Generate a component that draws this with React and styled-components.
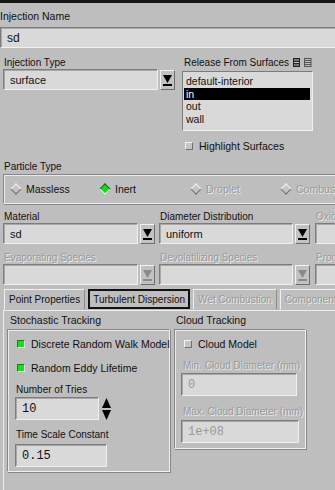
import React from "react";
import styled, { createGlobalStyle } from "styled-components";

const GlobalStyle = createGlobalStyle`
  body {
    margin: 0;
    background: #bebebe;
    font-family: "Liberation Sans", Arial, sans-serif;
    font-size: 10px;
    color: #111;
    overflow: hidden;
  }
`;

const Window = styled.div`
  width: 335px;
  height: 490px;
  overflow: hidden;
  background: #bebebe;
`;

const Canvas = styled.div`
  width: 420px;
`;

const TopStrip = styled.div`
  height: 3px;
  background: #161616;
`;

const Label = styled.div`
  height: 13px;
  line-height: 13px;
  white-space: nowrap;
  margin: ${(p) => p.m || "0"};
  color: ${(p) => (p.off ? "#9a9a9a" : "#111")};
  text-shadow: ${(p) => (p.off ? "1px 1px 0 #ececec" : "none")};
`;

const Field = styled.div`
  box-sizing: border-box;
  width: ${(p) => (p.w ? p.w + "px" : "100%")};
  height: ${(p) => p.h || 21}px;
  flex-shrink: 0;
  background: #d9d9d9;
  border: 1px solid;
  border-color: #7c7c7c #f0f0f0 #f0f0f0 #7c7c7c;
  box-shadow: inset 1px 1px 0 #a8a8a8;
  padding-left: ${(p) => p.pl || 6}px;
  display: flex;
  align-items: center;
  white-space: nowrap;
  font-size: ${(p) => (p.mono ? 12 : 11)}px;
  font-family: ${(p) => (p.mono ? '"Liberation Mono", monospace' : '"Liberation Sans", Arial, sans-serif')};
  color: ${(p) => (p.off ? "#9a9a9a" : "#111")};
`;

const NameBlock = styled.div`
  padding-top: 7px;
`;

const Row = styled.div`
  display: flex;
  align-items: flex-start;
  margin: ${(p) => p.m || "0"};
`;

const Col = styled.div`
  display: flex;
  flex-direction: column;
  width: ${(p) => p.w}px;
  flex-shrink: 0;
  margin-left: ${(p) => p.ml || 0}px;
`;

const Combo = styled.div`
  display: flex;
  align-items: flex-start;
  gap: 2px;
  margin-left: ${(p) => p.ml || 0}px;
`;

const ArrowBtn = styled.div`
  box-sizing: border-box;
  width: 15px;
  height: 20px;
  margin-top: 1px;
  flex-shrink: 0;
  border: 1px solid;
  border-color: #f2f2f2 #6e6e6e #6e6e6e #f2f2f2;
  background: #c2c2c2;
  display: flex;
  justify-content: center;
  padding-top: 4px;
`;

const Arrow = ({ off }) => (
  <ArrowBtn>
    <svg width="9" height="11" viewBox="0 0 9 11">
      <polygon points="0,0 9,0 4.5,8" fill={off ? "#8a8a8a" : "#000"} />
      <rect x="0" y="9" width="9" height="2" fill={off ? "#8a8a8a" : "#000"} />
    </svg>
  </ArrowBtn>
);

const ListHead = styled.div`
  display: flex;
  align-items: center;
  gap: 4px;
  margin-left: 2px;
  height: 13px;
  white-space: nowrap;
`;

const ListBox = styled.div`
  box-sizing: border-box;
  width: 131px;
  height: 60px;
  margin-top: 2px;
  background: #d9d9d9;
  border: 1px solid;
  border-color: #7c7c7c #f0f0f0 #f0f0f0 #7c7c7c;
  padding: 3px 2px 0 1px;
  font-size: 10.5px;
`;

const ListItem = styled.div`
  height: 12.5px;
  line-height: 12px;
  padding-left: 2px;
  background: ${(p) => (p.sel ? "#000" : "transparent")};
  color: ${(p) => (p.sel ? "#fff" : "#111")};
`;

const Check = styled.div`
  display: flex;
  align-items: center;
  gap: 6px;
  height: 13px;
  margin: ${(p) => p.m || "0"};
  white-space: nowrap;
  font-size: 10.5px;
`;

const Box = styled.div`
  box-sizing: border-box;
  width: 8px;
  height: 8px;
  flex-shrink: 0;
  border: 1px solid;
  border-color: ${(p) => (p.on ? "#555 #eee #eee #555" : "#f2f2f2 #707070 #707070 #f2f2f2")};
  background: ${(p) => (p.on ? "#00f000" : "#c4c4c4")};
`;

const Group = styled.div`
  box-sizing: border-box;
  border: 1px solid;
  border-color: #868686 #f0f0f0 #f0f0f0 #868686;
  box-shadow: inset 1px 1px 0 #eaeaea, 1px 1px 0 #868686;
  width: ${(p) => (p.w ? p.w + "px" : "auto")};
  height: ${(p) => (p.h ? p.h + "px" : "auto")};
  margin: ${(p) => p.m || "0"};
  padding: ${(p) => p.pad || "0"};
`;

const RadioRow = styled.div`
  display: flex;
  align-items: center;
  height: 100%;
`;

const Radio = styled.div`
  display: flex;
  align-items: center;
  gap: 6px;
  width: ${(p) => p.w}px;
  flex-shrink: 0;
  white-space: nowrap;
  font-size: 10.5px;
  color: ${(p) => (p.off ? "#9a9a9a" : "#111")};
  text-shadow: ${(p) => (p.off ? "1px 1px 0 #ececec" : "none")};
`;

const Diamond = styled.div`
  width: 6px;
  height: 6px;
  margin-left: 1px;
  transform: rotate(45deg);
  border: 1px solid;
  border-color: #f4f4f4 #707070 #707070 #f4f4f4;
  background: ${(p) => (p.on ? "#00e800" : "#c4c4c4")};
  ${(p) => p.on && "border-color: #4a4a4a #f4f4f4 #f4f4f4 #4a4a4a;"}
`;

const TabBar = styled.div`
  display: flex;
  align-items: flex-end;
  gap: 3px;
  margin: 3px 0 0 4px;
  height: 22px;
`;

const Tab = styled.div`
  box-sizing: border-box;
  height: ${(p) => (p.sel ? 20 : 21)}px;
  padding: 0 ${(p) => (p.sel ? 3 : 4)}px;
  margin-bottom: ${(p) => (p.sel ? 1 : 0)}px;
  display: flex;
  align-items: center;
  white-space: nowrap;
  font-size: 10px;
  border: ${(p) => (p.sel ? "2px solid #111" : "1px solid")};
  border-color: ${(p) => (p.sel ? "#111" : "#f0f0f0 #8a8a8a transparent #f0f0f0")};
  color: ${(p) => (p.off ? "#9a9a9a" : "#111")};
  text-shadow: ${(p) => (p.off ? "1px 1px 0 #ececec" : "none")};
`;

const Panel = styled.div`
  margin-left: 3px;
  border-top: 1px solid #ececec;
  border-left: 1px solid #ececec;
  height: 200px;
  padding: 3px 0 0 3px;
  display: flex;
  gap: 4px;
`;

const Spinner = styled.div`
  display: flex;
  flex-direction: column;
  justify-content: center;
  margin-left: 3px;
  height: 23px;
`;

const ListIcons = () => (
  <svg width="19" height="9" viewBox="0 0 19 9">
    <rect x="0" y="0" width="7" height="9" fill="#222" />
    <line x1="1" y1="2" x2="6" y2="2" stroke="#ccc" />
    <line x1="1" y1="4.5" x2="6" y2="4.5" stroke="#ccc" />
    <line x1="1" y1="7" x2="6" y2="7" stroke="#ccc" />
    <rect x="11.5" y="0.5" width="6.5" height="8" fill="none" stroke="#555" />
    <line x1="12" y1="2.5" x2="18" y2="2.5" stroke="#555" />
    <line x1="12" y1="4.5" x2="18" y2="4.5" stroke="#555" />
    <line x1="12" y1="6.5" x2="18" y2="6.5" stroke="#555" />
  </svg>
);

const SpinArrows = () => (
  <svg width="9" height="22" viewBox="0 0 9 22">
    <polygon points="4.5,0 9,10 0,10" fill="#000" />
    <polygon points="0,12 9,12 4.5,22" fill="#000" />
  </svg>
);

export default function App() {
  return (
    <Window>
      <GlobalStyle />
      <Canvas>
        <TopStrip />
        <NameBlock>
          <Label style={{ fontSize: 10.5 }}>Injection Name</Label>
          <Field h={21} style={{ marginTop: 4, fontSize: 12 }}>sd</Field>
        </NameBlock>

        <Row m="8px 0 0 0">
          <Col w={177}>
            <Label m="0 0 0 4px">Injection Type</Label>
            <Combo ml={3}>
              <Field w={155}>surface</Field>
              <Arrow />
            </Combo>
          </Col>
          <Col w={200} ml={5}>
            <ListHead>
              Release From Surfaces
              <ListIcons />
            </ListHead>
            <ListBox>
              <ListItem>default-interior</ListItem>
              <ListItem sel>in</ListItem>
              <ListItem>out</ListItem>
              <ListItem>wall</ListItem>
            </ListBox>
            <Check m="8px 0 0 3px">
              <Box />
              Highlight Surfaces
            </Check>
          </Col>
        </Row>

        <Label m="8px 0 0 4px">Particle Type</Label>
        <Group h={30} m="1px 0 0 3px" pad="0 0 0 7px">
          <RadioRow>
            <Radio w={89}><Diamond />Massless</Radio>
            <Radio w={91}><Diamond on />Inert</Radio>
            <Radio w={90} off><Diamond />Droplet</Radio>
            <Radio w={90} off><Diamond />Combusting</Radio>
          </RadioRow>
        </Group>

        <Row m="6px 0 0 0">
          <Col w={156}>
            <Label m="0 0 0 4px">Material</Label>
            <Combo ml={3}>
              <Field w={135}>sd</Field>
              <Arrow />
            </Combo>
            <Label m="7px 0 0 4px" off>Evaporating Species</Label>
            <Combo ml={3}>
              <Field w={135} />
              <Arrow off />
            </Combo>
          </Col>
          <Col w={156}>
            <Label m="0 0 0 4px">Diameter Distribution</Label>
            <Combo ml={3}>
              <Field w={134}>uniform</Field>
              <Arrow />
            </Combo>
            <Label m="7px 0 0 4px" off>Devolatilizing Species</Label>
            <Combo ml={3}>
              <Field w={134} />
              <Arrow off />
            </Combo>
          </Col>
          <Col w={100}>
            <Label m="0 0 0 4px" off>Oxidizing Species</Label>
            <Combo ml={3}>
              <Field w={60} />
            </Combo>
            <Label m="7px 0 0 4px" off>Product Species</Label>
            <Combo ml={3}>
              <Field w={60} />
            </Combo>
          </Col>
        </Row>

        <TabBar>
          <Tab>Point Properties</Tab>
          <Tab sel>Turbulent Dispersion</Tab>
          <Tab off>Wet Combustion</Tab>
          <Tab off>Components</Tab>
        </TabBar>

        <Panel>
          <Col w={163}>
            <Label m="0 0 0 3px" style={{ fontSize: 10.5 }}>Stochastic Tracking</Label>
            <Group w={163} h={143} m="2px 0 0 0" pad="7px 0 0 9px">
              <Check>
                <Box on />
                Discrete Random Walk Model
              </Check>
              <Check m="11px 0 0 0">
                <Box on />
                Random Eddy Lifetime
              </Check>
              <Label m="9px 0 0 -1px">Number of Tries</Label>
              <Row m="1px 0 0 -2px">
                <Field w={84} h={23} mono>10</Field>
                <Spinner>
                  <SpinArrows />
                </Spinner>
              </Row>
              <Label m="8px 0 0 -1px">Time Scale Constant</Label>
              <Row m="3px 0 0 -2px">
                <Field w={92} h={23} mono>0.15</Field>
              </Row>
            </Group>
          </Col>
          <Col w={132}>
            <Label m="0 0 0 2px" style={{ fontSize: 10.5 }}>Cloud Tracking</Label>
            <Group w={132} h={120} m="2px 0 0 0" pad="7px 0 0 9px">
              <Check>
                <Box />
                Cloud Model
              </Check>
              <Label m="9px 0 0 -1px" off>Min. Cloud Diameter (mm)</Label>
              <Field w={116} h={23} off mono style={{ marginLeft: -3, marginTop: 1 }}>0</Field>
              <Label m="9px 0 0 -1px" off>Max. Cloud Diameter (mm)</Label>
              <Field w={118} h={23} off mono style={{ marginLeft: -3, marginTop: 2 }}>1e+08</Field>
            </Group>
          </Col>
        </Panel>
      </Canvas>
    </Window>
  );
}
